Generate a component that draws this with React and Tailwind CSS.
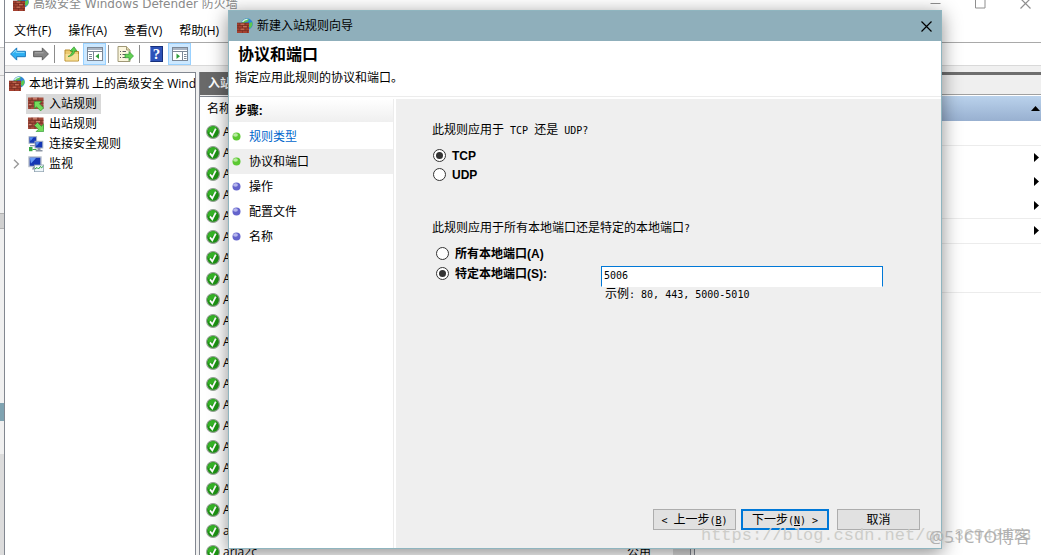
import React from "react";

const UI = "font-['Open_Sans','Noto_Sans_CJK_SC',sans-serif]";
const WIDE = "font-['DejaVu_Sans','Noto_Sans_CJK_SC',sans-serif]";
const MONO = "font-['DejaVu_Sans_Mono',monospace]";

function Bricks() {
  return (
    <g>
      <rect x="0" y="5" width="12" height="10" fill="#a4402f" />
      <path d="M0 5h12M0 7.5h12M0 10h12M0 12.5h12M3 5v2.5M8 5v2.5M5.5 7.5V10M10.5 7.5V10M1 7.5V10M3 10v2.5M8 10v2.5M5.5 12.5V15M10.5 12.5V15" stroke="#6d2a20" strokeWidth=".6" />
      <path d="M3.5 6.2h3.8M6 8.7h3.8M3.5 11.2h3.8" stroke="#d08a70" strokeWidth=".8" />
    </g>
  );
}

function FirewallIcon() {
  return (
    <svg width="16" height="16" viewBox="0 0 16 16" className="shrink-0" aria-hidden="true">
      <circle cx="10" cy="6" r="5.8" fill="#2f86d6" />
      <path d="M7 1.5C9 .3 11 .6 12 1.5l-1.5 2.2-2 .3L7 6 5 5zM12.5 5l2.6-1 .4 3-2 3.3-1.8-2z" fill="#5cc850" />
      <path d="M5.5 3.8C7 1.8 8.5 1.2 10.5 1.4" stroke="#d8f0fd" strokeWidth="1.4" fill="none" />
      <Bricks />
    </svg>
  );
}

function RuleIcon({ out }) {
  return (
    <svg width="16" height="16" viewBox="0 0 16 16" className="shrink-0" aria-hidden="true">
      <rect x="0" y="1.5" width="15.5" height="11.5" fill="#a85040" />
      <path d="M0 4.3h15.5M0 7.2h15.5M0 10.1h15.5M4 1.5v2.8M10 1.5v2.8M7 4.3v2.9M13 4.3v2.9M2 4.3v2.9M4 7.2v2.9M7 10.1V13M2 10.1V13" stroke="#6b2b23" strokeWidth=".7" />
      <path d="M5 2.8h4M8 5.7h4M1 8.6h2.6" stroke="#d99a86" strokeWidth=".9" />
      {out ? (
        <path d="M15.6 15.6V8.2l-2.3 2.1-3.8-3.8-3 3 3.9 3.8-2.3 2.3z" fill="#74dc5c" stroke="#2f9a34" strokeWidth=".7" />
      ) : (
        <path d="M6.4 5.4h7.2l-2.2 2.3 4.2 4.2-3 3-4.2-4.2-2 2.2z" fill="#74dc5c" stroke="#2f9a34" strokeWidth=".7" />
      )}
    </svg>
  );
}

function ComputersIcon() {
  return (
    <svg width="16" height="16" viewBox="0 0 16 16" className="shrink-0" aria-hidden="true">
      <rect x="1" y=".7" width="7.6" height="6.6" fill="#1537b4" stroke="#a9b4c4" />
      <path d="M1.7 1.3h4L2.5 5z" fill="#5a8ff0" />
      <path d="M2 9h5v1.3H2z" fill="#8b95a4" />
      <rect x="7" y="5.3" width="7.8" height="6.7" fill="#1537b4" stroke="#a9b4c4" />
      <path d="M7.7 6h4L8.5 10z" fill="#5a8ff0" />
      <path d="M9.5 12h3v2h2v1.5H7.7V14h1.8z" fill="#8b95a4" />
      <path d="M1 11h3.5v4.2H1z" fill="#38a843" />
      <path d="M4.5 13.5h4" stroke="#38a843" />
    </svg>
  );
}

function MonitorIcon() {
  return (
    <svg width="16" height="16" viewBox="0 0 16 16" className="shrink-0" aria-hidden="true">
      <rect x="1" y="1" width="12" height="9.5" fill="#1537b4" stroke="#b4bdca" strokeWidth="1.4" />
      <path d="M1.8 1.8h6.500L3 7.6z" fill="#6698f4" />
      <path d="M5 11h3v2.500H4z" fill="#8b95a4" />
      <rect x="6.5" y="9" width="9.2" height="6.7" fill="#eef6fa" stroke="#8ca0ae" strokeWidth=".8" />
      <path d="M7 13l2-1.5 1.5 1.5 2-2.6 1 1.4 1.8-1.6" stroke="#2ba338" fill="none" />
    </svg>
  );
}

function ArrowIcon({ forward }) {
  return forward ? (
    <svg width="16" height="14" viewBox="0 0 16 14" aria-hidden="true">
      <path d="M15.4 7L9.3.9v3.4H.6v5.4h8.7v3.4z" fill="#858585" stroke="#5e5e5e" />
      <path d="M2 5.8h8.5" stroke="#ababab" />
    </svg>
  ) : (
    <svg width="16" height="14" viewBox="0 0 16 14" aria-hidden="true">
      <path d="M.6 7L6.7.9v3.4h8.7v5.4H6.7v3.4z" fill="#2fb0f2" stroke="#1c78bc" />
      <path d="M3 6.2L6 3v2.4h8.5" stroke="#8bdcfb" fill="none" />
    </svg>
  );
}

function FolderIcon() {
  return (
    <svg width="16" height="16" viewBox="0 0 16 16" aria-hidden="true">
      <path d="M1 4h5l1 1.5h7.5V15H1z" fill="#eccb71" stroke="#b78b2c" />
      <path d="M1.5 8h12.8v6.5H1.5z" fill="#f6df97" />
      <path d="M4 10.5C6 9.500 8 8 8.500 5H6L10 .8 13 5h-2.300C10.500 8 8 10.500 4 10.500z" fill="#5ad04c" stroke="#2b8b2b" strokeWidth=".6" />
    </svg>
  );
}

function PaneIcon({ right }) {
  return (
    <svg width="16" height="14" viewBox="0 0 16 14" aria-hidden="true">
      <rect x=".5" y=".5" width="15" height="13" fill="#fff" stroke="#7b8796" />
      <path d="M1 1h14v2H1z" fill="#a9b4c2" />
      <path d="M1 4.500h14" stroke="#7b8796" />
      {right ? (
        <>
          <path d="M10.500 5v8.500" stroke="#7b8796" />
          <path d="M4.500 6.500v5.500L8 9.250z" fill="#2f9e3a" />
          <path d="M12 7.500h2.500M12 9.500h2.500M12 11.500h2.500" stroke="#7b8796" />
        </>
      ) : (
        <>
          <path d="M6.500 5v8.500" stroke="#7b8796" />
          <path d="M12 6.500v5.500L8.500 9.250z" fill="#2f9e3a" />
          <path d="M2 7.500h3M2 9.500h3M2 11.500h3" stroke="#7b8796" />
        </>
      )}
    </svg>
  );
}

function ExportIcon() {
  return (
    <svg width="17" height="16" viewBox="0 0 17 16" aria-hidden="true">
      <path d="M1 .5h8.500L13 4v11.500H1z" fill="#fbf6dd" stroke="#a09877" />
      <path d="M9.500.5V4H13" fill="#e6ddb0" stroke="#a09877" />
      <path d="M3 5.500h1M5.500 5.500H9M3 8.500h1M5.500 8.500H9M3 11.500h1M5.500 11.500H9" stroke="#5f5f5f" />
      <path d="M8 8.300h4V5.500L16.500 10 12 14.500v-2.800H8z" fill="#63d152" stroke="#2c9532" strokeWidth=".7" />
    </svg>
  );
}

function HelpIcon() {
  return (
    <span className="flex h-4 w-[13px] items-center justify-center border border-[#16307c] border-l-[#7f95da] bg-[#2d52b8] font-['Liberation_Serif',serif] text-[15px] font-bold leading-4 text-white">
      ?
    </span>
  );
}

function CheckIcon() {
  return (
    <svg width="14" height="14" viewBox="0 0 14 14" className="block" aria-hidden="true">
      <circle cx="7" cy="7" r="6.400" fill="#1c9412" stroke="#9aa59a" strokeWidth="1.100" />
      <path d="M1.800 7A5.300 5.300 0 0 1 10.500 2.600C9 5 6 8 1.800 7z" fill="#35b426" />
      <path d="M4 7.400l2.300 3L9.800 3.600" stroke="#fff" strokeWidth="1.800" fill="none" />
    </svg>
  );
}

function Caption({ kind }) {
  return (
    <svg width="11" height="11" viewBox="0 0 11 11" aria-hidden="true" fill="none" stroke="currentColor">
      {kind === "min" && <path d="M.5 5.500h10" />}
      {kind === "max" && <path d="M.5.500h9.500v9.500H.5z" />}
      {kind === "close" && <path d="M.5.500l10 10M10.500.500l-10 10" strokeWidth="1.200" />}
    </svg>
  );
}

function ToolButton({ label, active, children }) {
  return (
    <button
      type="button"
      aria-label={label}
      className={
        active
          ? "flex h-[22px] w-[23px] items-center justify-center border border-[#99d1ff] bg-[#cce8ff]"
          : "flex h-[22px] w-[23px] items-center justify-center"
      }
    >
      {children}
    </button>
  );
}

function Divider() {
  return <span className="ml-[2px] mr-[5px] h-[18px] w-px bg-[#8c8c8c]" />;
}

function TreeItem({ icon, children, selected, expandable }) {
  return (
    <li className="flex h-5 items-center pl-[6px]">
      <span className="w-[15px] shrink-0 text-[#9a9a9a]">
        {expandable && (
          <svg width="7" height="10" viewBox="0 0 7 10" className="ml-[2px]" fill="none" stroke="currentColor" strokeWidth="1.400" aria-hidden="true">
            <path d="M1 .8L5.400 5 1 9.200" />
          </svg>
        )}
      </span>
      <span className={selected ? "flex h-5 items-center gap-[5px] bg-[#d9d9d9] px-[2px] pr-1" : "flex h-5 items-center gap-[5px] px-[2px]"}>
        {icon}
        {children}
      </span>
    </li>
  );
}

const rules = [...Array(19).fill("A"), "a", "aria2c"];

function MainWindow() {
  return (
    <div className="flex min-w-0 flex-1 flex-col border-l border-[#828790] bg-[#f0f0f0]">
      <header className="-mt-3 flex h-8 shrink-0 items-center bg-white pl-2 text-[#8a8a8a]">
        <FirewallIcon />
        <h1 className={`ml-1 text-[12px] ${WIDE}`}>高级安全 Windows Defender 防火墙</h1>
        <div className="ml-auto flex gap-[34px] pb-[2px] pr-[10px] text-[#8f8f8f]">
          <button type="button" aria-label="最小化"><Caption kind="min" /></button>
          <button type="button" aria-label="最大化"><Caption kind="max" /></button>
          <button type="button" aria-label="关闭"><Caption kind="close" /></button>
        </div>
      </header>
      <nav className="flex h-[23px] shrink-0 items-center gap-[17px] border-b border-[#a9a9a9] bg-white pl-[9px]">
        <button type="button">文件(F)</button>
        <button type="button">操作(A)</button>
        <button type="button">查看(V)</button>
        <button type="button">帮助(H)</button>
      </nav>
      <div className="flex h-[23px] shrink-0 items-center border-b border-[#d9d9d9] bg-white pl-px">
        <ToolButton label="后退"><ArrowIcon /></ToolButton>
        <ToolButton label="前进"><ArrowIcon forward /></ToolButton>
        <Divider />
        <ToolButton label="上一级"><FolderIcon /></ToolButton>
        <ToolButton label="显示/隐藏控制台树" active><PaneIcon /></ToolButton>
        <Divider />
        <ToolButton label="导出列表"><ExportIcon /></ToolButton>
        <Divider />
        <ToolButton label="帮助"><HelpIcon /></ToolButton>
        <ToolButton label="显示/隐藏操作窗格" active><PaneIcon right /></ToolButton>
      </div>
      <div className="mt-[6px] flex min-h-0 flex-1 gap-[3px]">
        <aside className="w-[191px] shrink-0 overflow-hidden border-r border-t border-[#828790] bg-white">
          <div className="flex h-[21px] items-center gap-1 whitespace-nowrap pl-1">
            <FirewallIcon />
            <span>本地计算机 上的高级安全 Windows Defender</span>
          </div>
          <ul>
            <TreeItem icon={<RuleIcon />} selected>入站规则</TreeItem>
            <TreeItem icon={<RuleIcon out />}>出站规则</TreeItem>
            <TreeItem icon={<ComputersIcon />}>连接安全规则</TreeItem>
            <TreeItem icon={<MonitorIcon />} expandable>监视</TreeItem>
          </ul>
        </aside>
        <main className="flex min-w-0 flex-1 flex-col overflow-hidden border-x border-[#828790]">
          <h2 className="h-[23px] shrink-0 bg-[#696969] pl-2 font-bold leading-[23px] text-white">入站规则</h2>
          <div className="mt-px flex min-h-0 flex-1 overflow-hidden border-t border-[#828790] bg-white">
            <div className="min-w-0 flex-1">
              <table className="w-full table-fixed border-collapse text-left">
                <thead>
                  <tr className="h-6">
                    <th className="w-[427px] pl-[7px] font-normal">名称</th>
                    <th />
                  </tr>
                </thead>
                <tbody>
                  {rules.map((name, i) => (
                    <tr key={i} className="h-[21px]">
                      <td className="p-0 pl-[6px]">
                        <span className="flex h-[21px] items-center gap-[3px]">
                          <CheckIcon />
                          {name}
                        </span>
                      </td>
                      <td className="p-0">{i === rules.length - 1 ? "公用" : ""}</td>
                    </tr>
                  ))}
                </tbody>
              </table>
            </div>
            <div className="w-[17px] bg-[#dcdcdc]" />
          </div>
        </main>
        <aside className="flex w-[347px] shrink-0 flex-col border-l border-t-[3px] border-[#828790] border-t-[#6e6e6e] bg-white">
          <div className="h-5 border-b border-[#a0a0a0] bg-[#efefef]" />
          <button type="button" aria-label="折叠" className="mt-px flex h-[25px] items-center justify-end bg-linear-to-b from-[#bad2ec] to-[#98b0d0] pr-[1px] text-black">
            <svg width="9" height="5" viewBox="0 0 9 5" aria-hidden="true"><path d="M4.500 0L9 5H0z" /></svg>
          </button>
          <ul>
            <li className="h-[25px] border-b border-[#ececec]" />
            {[0, 1, 2, 3].map((i) => (
              <li
                key={i}
                className={i > 1 ? "flex h-[25px] items-center justify-end border-b border-[#ececec] pb-px pr-[2px]" : "flex h-6 items-center justify-end pb-px pr-[2px]"}
              >
                <svg width="5" height="9" viewBox="0 0 5 9" aria-hidden="true"><path d="M0 0l5 4.500L0 9z" /></svg>
              </li>
            ))}
            <li className="h-[49px] border-b border-[#ececec]" />
          </ul>
        </aside>
      </div>
    </div>
  );
}

const steps = [
  { name: "规则类型", done: true, link: true },
  { name: "协议和端口", done: true, current: true },
  { name: "操作" },
  { name: "配置文件" },
  { name: "名称" },
];

function Bullet({ done }) {
  return (
    <svg width="9" height="9" viewBox="0 0 9 9" aria-hidden="true">
      <circle cx="4.500" cy="4.500" r="4" fill={done ? "#5cc832" : "#6464cc"} />
      <ellipse cx="3.500" cy="3" rx="2.400" ry="1.800" fill={done ? "#b8eaa0" : "#b6b6ec"} />
    </svg>
  );
}

function Radio({ name, id, checked, children }) {
  return (
    <div className="flex h-[19px] items-center gap-[6px] font-['Liberation_Sans','Noto_Sans_CJK_SC',sans-serif] font-bold">
      <input
        type="radio"
        name={name}
        id={id}
        defaultChecked={checked}
        className="h-[13px] w-[13px] shrink-0 appearance-none rounded-full border border-[#333] bg-white p-[2px] before:block before:h-[7px] before:w-[7px] before:rounded-full checked:before:bg-[#333]"
      />
      <label htmlFor={id}>{children}</label>
    </div>
  );
}

function Mono({ children }) {
  return <span className={`whitespace-pre text-[10px] ${MONO}`}>{children}</span>;
}

function Wizard() {
  return (
    <section
      role="dialog"
      aria-labelledby="wizard-title"
      className="absolute bottom-[6px] left-[228px] right-[99px] top-[10px] flex flex-col border border-[#8fb5bf] bg-white shadow-[0_4px_18px_rgba(0,0,0,0.45)]"
    >
      <header className="flex h-[30px] shrink-0 items-center bg-[#8fafbb] pl-2 pr-[9px]">
        <FirewallIcon />
        <h2 id="wizard-title" className="ml-1">新建入站规则向导</h2>
        <button type="button" aria-label="关闭" className="ml-auto"><Caption kind="close" /></button>
      </header>
      <div className="h-14 shrink-0 border-b border-[#ececec] pl-[6px] pt-[3px]">
        <h3 className="pl-[3px] text-[16px] font-bold leading-5">协议和端口</h3>
        <p className="mt-1 leading-5">指定应用此规则的协议和端口。</p>
      </div>
      <div className="mt-[2px] flex min-h-0 flex-1 gap-[2px]">
        <nav className="w-[165px] shrink-0 border-r border-[#ececec]">
          <h4 className="h-[23px] bg-linear-to-b from-white to-[#efefef] pl-[6px] font-bold leading-6">步骤:</h4>
          <ol className="mt-[2px]">
            {steps.map((s) => (
              <li key={s.name} className={s.current ? "flex h-[25px] items-center gap-2 bg-[#efefef] pl-[3px]" : "flex h-[25px] items-center gap-2 pl-[3px]"}>
                <Bullet done={s.done} />
                {s.link ? <a href="#type" className="text-[#0066cc]">{s.name}</a> : <span>{s.name}</span>}
              </li>
            ))}
          </ol>
        </nav>
        <form className="flex min-w-0 flex-1 flex-col bg-[#efefef] pb-[18px] pl-9 pt-[21px]" onSubmit={(e) => e.preventDefault()}>
          <p className="leading-5">
            此规则应用于<Mono> TCP </Mono>还是<Mono> UDP?</Mono>
          </p>
          <div className="mt-[5px] pl-[1px]">
            <Radio name="protocol" id="tcp" checked>TCP</Radio>
            <Radio name="protocol" id="udp">UDP</Radio>
          </div>
          <p className="mt-[34px] leading-5">
            此规则应用于所有本地端口还是特定的本地端口<Mono>?</Mono>
          </p>
          <div className="mt-[5px] flex items-end pr-[58px]">
            <div className="w-[169px] shrink-0 space-y-px pl-1">
              <Radio name="ports" id="all-ports">所有本地端口(A)</Radio>
              <Radio name="ports" id="some-ports" checked>特定本地端口(S):</Radio>
            </div>
            <input
              aria-label="特定本地端口"
              defaultValue="5006"
              className={`-mb-1 h-[21px] min-w-0 flex-1 border border-[#0078d7] border-b-white bg-white px-[2px] pb-[3px] text-[10px] outline-none ${MONO}`}
            />
          </div>
          <p className="mt-px pl-[173px] leading-5">
            示例<Mono>: 80, 443, 5000-5010</Mono>
          </p>
          <div className="mt-auto flex justify-end pr-[21px]">
            <button type="button" className="mr-[5px] h-[21px] w-[83px] border border-[#adadad] bg-[#e1e1e1] leading-5">
              <Mono>&lt; </Mono>上一步<Mono>(<u>B</u>)</Mono>
            </button>
            <button type="submit" className="mr-2 h-[21px] w-[88px] border-2 border-[#0078d7] bg-[#e1e1e1] leading-[18px]">
              下一步<Mono>(<u>N</u>) &gt;</Mono>
            </button>
            <button type="button" className="h-[21px] w-[83px] border border-[#adadad] bg-[#e1e1e1] leading-5">取消</button>
          </div>
        </form>
      </div>
    </section>
  );
}

export default function App() {
  return (
    <div className={`relative flex h-screen w-full overflow-hidden bg-white text-[12px] leading-4 text-black ${UI}`}>
      <div className="flex w-1 shrink-0 flex-col bg-[#f0f0f0]">
        <div className="h-12 border-b border-[#c4c4c4] bg-white" />
        <div className="h-7 border-b border-[#c4c4c4]" />
        <div className="mt-[137px] h-4 border-y border-[#b0b0b0] bg-[#d0d0d0]" />
        <div className="mt-[174px] h-[18px] bg-[#7fa3b1]" />
        <div className="mt-[33px] flex-1 bg-[#dcdcdc]" />
      </div>
      <MainWindow />
      <Wizard />
      <p className="pointer-events-none absolute bottom-[9px] right-[10px] whitespace-nowrap font-['Liberation_Mono',monospace] text-[17px] leading-5 text-[#cdcdc9]">
        https://blog.csdn.net/<span className="text-[16px]">qq_36949176</span>
      </p>
      <p className="pointer-events-none absolute bottom-[8px] right-[10px] whitespace-nowrap text-[17px] leading-5 text-[#b0b0b0]">@51CTO博客</p>
    </div>
  );
}
